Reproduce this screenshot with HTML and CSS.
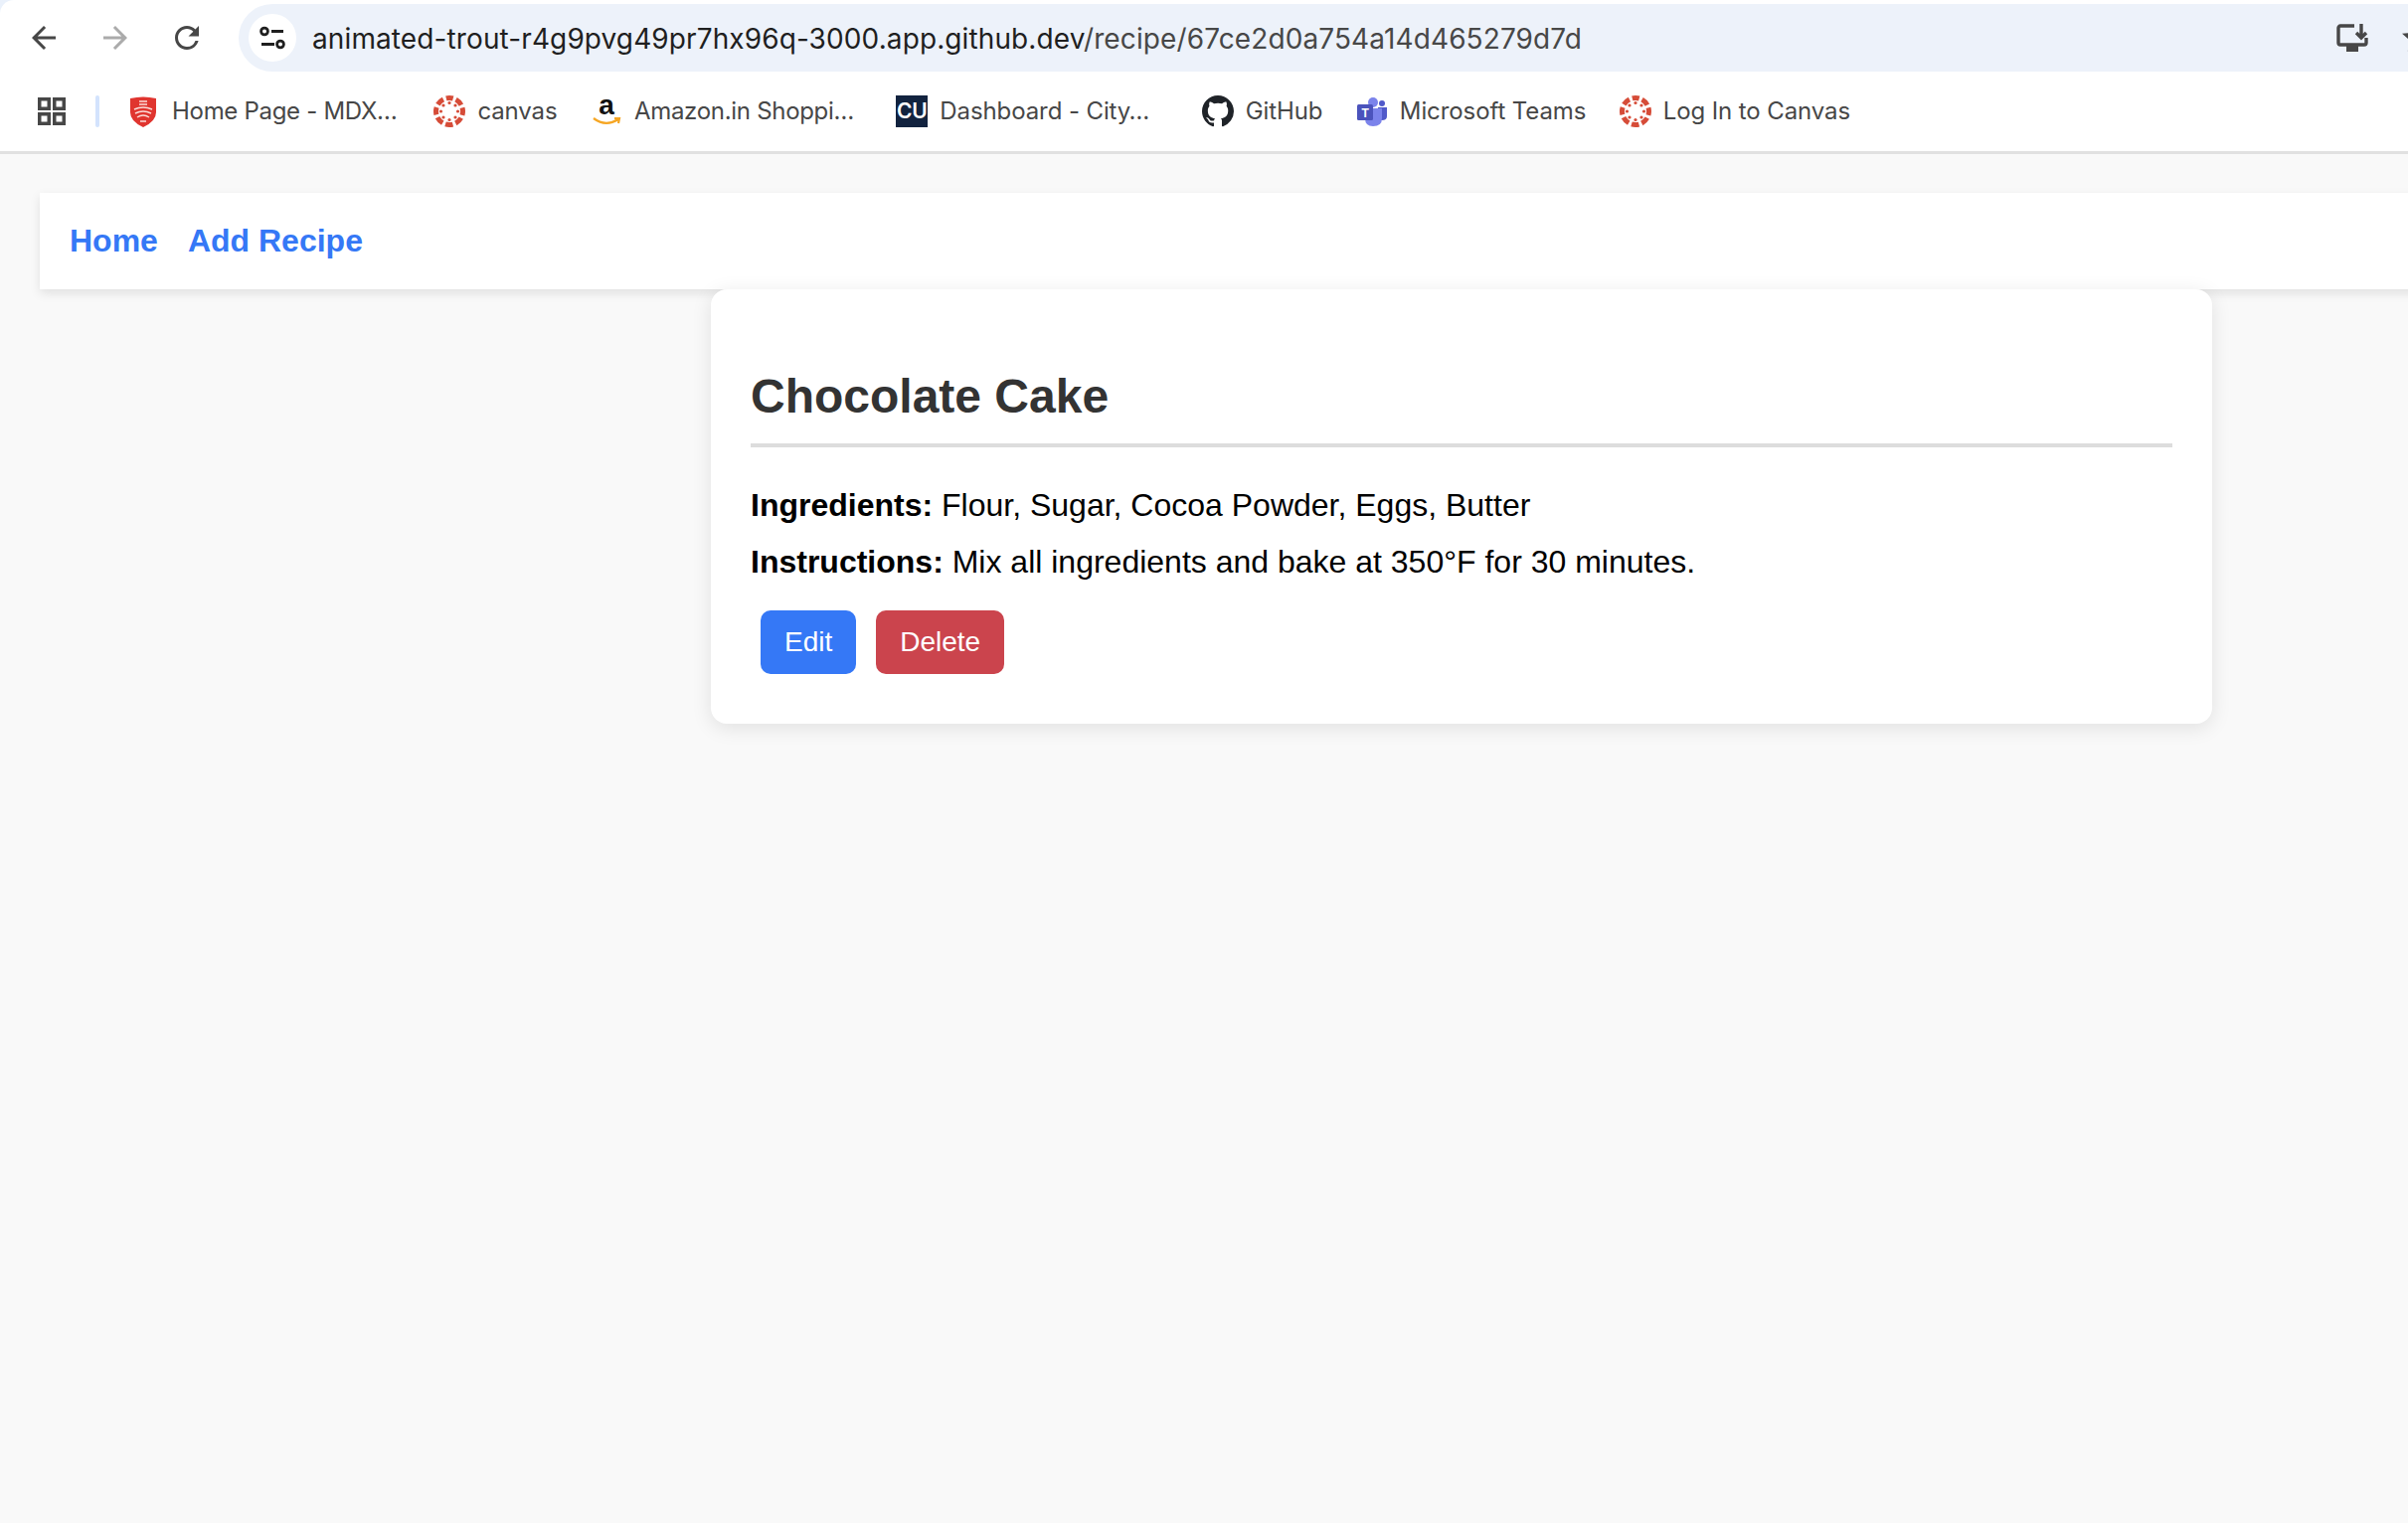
FILE: index.html
```html
<!DOCTYPE html>
<html lang="en">
<head>
    <meta charset="UTF-8">
    <meta name="viewport" content="width=device-width, initial-scale=1.0">
    <title>Chocolate Cake</title>
    <link rel="stylesheet" href="styles.css">
</head>
<body>
    <svg class="defs" width="0" height="0">
        <symbol id="canvas-logo" viewBox="0 0 32 32">
            <circle class="canvas-ring" cx="16" cy="16" r="13.5"/>
            <g class="canvas-dots">
                <circle cx="16" cy="7.5" r="1.6"/>
                <circle cx="22" cy="10" r="1.6"/>
                <circle cx="24.5" cy="16" r="1.6"/>
                <circle cx="22" cy="22" r="1.6"/>
                <circle cx="16" cy="24.5" r="1.6"/>
                <circle cx="10" cy="22" r="1.6"/>
                <circle cx="7.5" cy="16" r="1.6"/>
                <circle cx="10" cy="10" r="1.6"/>
            </g>
        </symbol>
    </svg>

    <header class="chrome">
        <div class="toolbar">
            <svg class="nav-icon" viewBox="0 0 24 24"><path d="M20 11H7.83l5.59-5.59L12 4l-8 8 8 8 1.41-1.41L7.83 13H20z"/></svg>
            <svg class="nav-icon nav-icon-off" viewBox="0 0 24 24"><path d="M4 11h12.17l-5.59-5.59L12 4l8 8-8 8-1.41-1.41L16.17 13H4z"/></svg>
            <svg class="nav-icon" viewBox="0 0 24 24"><path d="M17.65 6.35A7.96 7.96 0 0 0 12 4c-4.42 0-7.99 3.58-7.99 8s3.57 8 7.99 8c3.73 0 6.84-2.55 7.73-6h-2.08A5.99 5.99 0 0 1 12 18c-3.31 0-6-2.69-6-6s2.69-6 6-6c1.66 0 3.14.69 4.22 1.78L13 11h7V4l-2.35 2.35z"/></svg>
            <div class="address">
                <span class="site-info">
                    <svg width="48" height="48" viewBox="0 0 48 48">
                        <circle class="tune" cx="16" cy="17.5" r="3.4"/>
                        <path class="tune" d="M23 17.5H35M13 30.5H26"/>
                        <circle class="tune" cx="32" cy="30.5" r="3.4"/>
                    </svg>
                </span>
                <span class="url"><span class="url-host">animated-trout-r4g9pvg49pr7hx96q-3000.app.github.dev</span>/recipe/67ce2d0a754a14d465279d7d</span>
                <div class="address-actions">
                    <svg class="install-icon" width="32" height="28" viewBox="0 0 32 28">
                        <path class="install-line" d="M18 2H4a2 2 0 0 0-2 2v15a2 2 0 0 0 2 2h24a2 2 0 0 0 2-2v-5M25 0v13M20 9l5 5 5-5"/>
                        <rect class="install-stand" x="10" y="22" width="12" height="6"/>
                    </svg>
                    <svg class="nav-icon" viewBox="0 0 24 24"><path d="M22 9.24l-7.19-.62L12 2 9.19 8.63 2 9.24l5.46 4.73L5.82 21 12 17.27 18.18 21l-1.63-7.03L22 9.24zM12 15.4l-3.76 2.27 1-4.28-3.32-2.88 4.38-.38L12 6.1l1.71 4.04 4.38.38-3.32 2.88 1 4.28L12 15.4z"/></svg>
                </div>
            </div>
        </div>

        <div class="bookmarks">
            <svg class="apps" width="28" height="28" viewBox="0 0 28 28">
                <rect x="1.75" y="1.75" width="9.5" height="9.5"/>
                <rect x="16.75" y="1.75" width="9.5" height="9.5"/>
                <rect x="1.75" y="16.75" width="9.5" height="9.5"/>
                <rect x="16.75" y="16.75" width="9.5" height="9.5"/>
            </svg>
            <span class="divider"></span>

            <a class="bookmark">
                <svg class="favicon" viewBox="0 0 32 32">
                    <path class="shield" d="M2 3Q15 0 28 3V17Q28 26 15 32Q2 26 2 17Z"/>
                    <path class="shield-marks" d="M11 6H19M11 9H19M6 14Q15 10 24 14M7 18Q15 14 23 18M9 22Q15 18 21 22M12 26H18"/>
                </svg>
                <span class="bookmark-name bookmark-clip bookmark-tight">Home Page - MDX…</span>
            </a>
            <a class="bookmark">
                <svg class="favicon"><use href="#canvas-logo"/></svg>
                <span class="bookmark-name">canvas</span>
            </a>
            <a class="bookmark">
                <svg class="favicon" viewBox="0 0 32 32">
                    <text class="amazon-a" x="16" y="19" text-anchor="middle">a</text>
                    <path class="amazon-smile" d="M3 23Q15 32 28 24M24 23L29 23L28 28"/>
                </svg>
                <span class="bookmark-name bookmark-clip bookmark-tight">Amazon.in Shoppi…</span>
            </a>
            <a class="bookmark">
                <span class="favicon cu-logo">CU</span>
                <span class="bookmark-name bookmark-clip">Dashboard - City…</span>
            </a>
            <a class="bookmark">
                <svg class="favicon github-logo" viewBox="0 0 16 16"><path d="M8 0C3.58 0 0 3.58 0 8c0 3.54 2.29 6.53 5.47 7.59.4.07.55-.17.55-.38 0-.19-.01-.82-.01-1.49-2.01.37-2.53-.49-2.69-.94-.09-.23-.48-.94-.82-1.13-.28-.15-.68-.52-.01-.53.63-.01 1.08.58 1.23.82.72 1.21 1.87.87 2.33.66.07-.52.28-.87.51-1.07-1.78-.2-3.64-.89-3.64-3.95 0-.87.31-1.59.82-2.15-.08-.2-.36-1.02.08-2.12 0 0 .67-.21 2.2.82.64-.18 1.32-.27 2-.27.68 0 1.36.09 2 .27 1.53-1.04 2.2-.82 2.2-.82.44 1.1.16 1.92.08 2.12.51.56.82 1.27.82 2.15 0 3.07-1.87 3.75-3.65 3.95.29.25.54.73.54 1.48 0 1.07-.01 1.93-.01 2.2 0 .21.15.46.55.38A8.013 8.013 0 0 0 16 8c0-4.42-3.58-8-8-8z"/></svg>
                <span class="bookmark-name">GitHub</span>
            </a>
            <a class="bookmark">
                <svg class="favicon" viewBox="0 0 32 32">
                    <circle class="teams-dark" cx="26" cy="8" r="3"/>
                    <path class="teams-dark" d="M22 12H31V21Q31 25 26 25H22Z"/>
                    <circle class="teams-light" cx="17" cy="7" r="5"/>
                    <path class="teams-light" d="M9 13H26V23Q26 31 17 31Q9 31 9 23Z"/>
                    <rect class="teams-square" x="1" y="9" width="16" height="16" rx="1.5"/>
                    <text class="teams-t" x="9" y="22" text-anchor="middle">T</text>
                </svg>
                <span class="bookmark-name">Microsoft Teams</span>
            </a>
            <a class="bookmark">
                <svg class="favicon"><use href="#canvas-logo"/></svg>
                <span class="bookmark-name">Log In to Canvas</span>
            </a>
        </div>
    </header>

    <div class="page">
        <nav class="site-nav">
            <a href="#">Home</a>
            <a href="#">Add Recipe</a>
        </nav>

        <main class="recipe">
            <h2>Chocolate Cake</h2>
            <p><strong>Ingredients:</strong> Flour, Sugar, Cocoa Powder, Eggs, Butter</p>
            <p><strong>Instructions:</strong> Mix all ingredients and bake at 350°F for 30 minutes.</p>
            <div class="actions">
                <a class="btn btn-edit" href="#">Edit</a>
                <a class="btn btn-delete" href="#">Delete</a>
            </div>
        </main>
    </div>
</body>
</html>
```

FILE: styles.css
```css
html, body {
    margin: 0;
    padding: 0;
    height: 100%;
    overflow: hidden;
}

body {
    background: #f9f9f9;
    font-family: "Liberation Sans", Arial, sans-serif;
}

.defs {
    display: block;
    height: 0;
}

/* browser toolbar */
.chrome {
    background: #eaf1fb;
    border-bottom: 3px solid #e1e1e1;
    font-family: Inter, "Noto Sans", sans-serif;
}

.toolbar {
    display: flex;
    align-items: center;
    gap: 36px;
    height: 76px;
    padding-left: 26px;
    background: #fff;
    border-top-left-radius: 14px;
}

.nav-icon {
    flex: none;
    width: 36px;
    height: 36px;
    fill: #474747;
}

.nav-icon-off {
    fill: #ababab;
}

.address {
    flex: none;
    display: flex;
    align-items: center;
    box-sizing: border-box;
    width: 2231px;
    height: 68px;
    margin-left: -2px;
    padding: 0 22px 0 10px;
    background: #edf2fa;
    border-radius: 34px;
}

.site-info {
    width: 48px;
    height: 48px;
    background: #fff;
    border-radius: 50%;
}

.tune {
    fill: none;
    stroke: #1f1f1f;
    stroke-width: 2.8;
}

.url {
    margin: 2px 0 0 16px;
    font-size: 28px;
    letter-spacing: 0.11px;
    color: #474747;
    white-space: nowrap;
}

.url-host {
    color: #1f1f1f;
}

.address-actions {
    display: flex;
    align-items: center;
    gap: 31px;
    margin-left: auto;
}

.install-line {
    fill: none;
    stroke: #474747;
    stroke-width: 3.4;
}

.install-stand {
    fill: #474747;
}

/* bookmarks bar */
.bookmarks {
    display: flex;
    align-items: center;
    height: 72px;
    padding: 0 0 4px 38px;
    background: #fff;
    font-size: 24px;
    letter-spacing: -0.1px;
    color: #474747;
}

.apps {
    flex: none;
    fill: none;
    stroke: #474747;
    stroke-width: 3.5;
}

.divider {
    width: 4px;
    height: 32px;
    margin: 0 29px 0 30px;
    background: #d3e3fd;
    border-radius: 2px;
}

.bookmark {
    display: flex;
    align-items: center;
    gap: 12px;
    margin-right: 33.4px;
    white-space: nowrap;
}

.bookmark-name {
    margin-top: -2px;
}

.bookmark-clip {
    width: 230px;
}

.bookmark-tight {
    letter-spacing: -0.3px;
}

.favicon {
    flex: none;
    display: block;
    width: 32px;
    height: 32px;
}

.canvas-ring {
    fill: none;
    stroke: #d64c38;
    stroke-width: 5;
    stroke-dasharray: 7.6 3;
    stroke-dashoffset: 3.8;
    transform: rotate(-90deg);
    transform-origin: center;
}

.canvas-dots {
    fill: #d64c38;
}

.shield {
    fill: #e0352f;
}

.shield-marks {
    fill: none;
    stroke: #fbdcd9;
    stroke-width: 1.5;
}

.amazon-a {
    font: bold 28px "Liberation Sans", sans-serif;
    fill: #111;
}

.amazon-smile {
    fill: none;
    stroke: #f6a623;
    stroke-width: 2.2;
}

.cu-logo {
    background: #12233f;
    color: #fff;
    font-size: 21px;
    font-weight: 600;
    line-height: 32px;
    letter-spacing: 0;
    text-align: center;
}

.github-logo {
    fill: #1f2328;
}

.teams-dark {
    fill: #5059c9;
}

.teams-light {
    fill: #7b83eb;
}

.teams-square {
    fill: #4b53bc;
}

.teams-t {
    font: bold 12px "Liberation Sans", sans-serif;
    fill: #fff;
}

/* the app itself, wider than the captured window */
.page {
    width: 2860px;
    padding: 39px 40px 0;
}

.site-nav {
    display: flex;
    gap: 30px;
    padding: 30px;
    background: #fff;
    box-shadow: 0 4px 10px rgba(0, 0, 0, 0.1);
}

.site-nav a {
    color: #3578f6;
    font-size: 32px;
    font-weight: bold;
    text-decoration: none;
}

.recipe {
    box-sizing: border-box;
    width: 1510px;
    margin: 0 auto;
    padding: 40px;
    background: #fff;
    border-radius: 16px;
    box-shadow: 0 4px 20px rgba(0, 0, 0, 0.1);
}

.recipe h2 {
    margin: 40px 0;
    padding-bottom: 20px;
    border-bottom: 4px solid #ddd;
    color: #333;
    font-size: 48px;
}

.recipe p {
    margin: 20px 0;
    color: #000;
    font-size: 32px;
}

.actions {
    display: flex;
    gap: 20px;
    margin: 30px 10px 10px;
}

.btn {
    padding: 16px 24px;
    border-radius: 10px;
    color: #fff;
    font-size: 28px;
    text-decoration: none;
}

.btn-edit {
    background: #3578f6;
}

.btn-delete {
    background: #cb444d;
}
```
